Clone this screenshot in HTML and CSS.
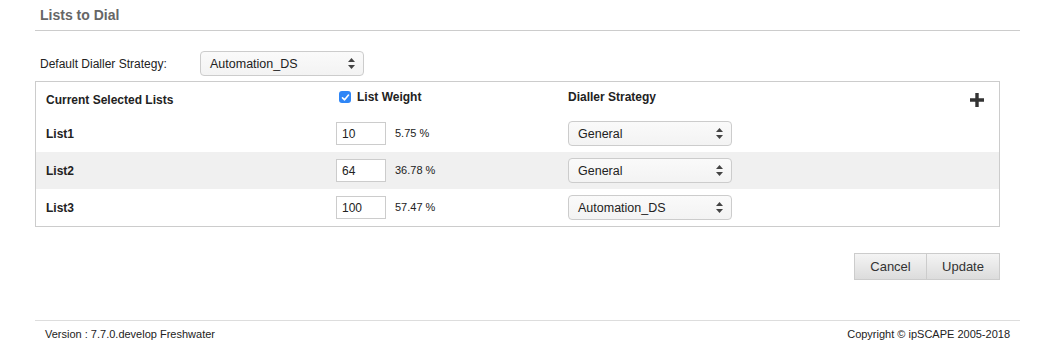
FILE: index.html
```html
<!DOCTYPE html>
<html lang="en">
<head>
    <meta charset="UTF-8">
    <title>Lists to Dial</title>
    <link rel="stylesheet" href="styles.css">
</head>
<body>
    <div class="page">
        <h2 class="title">Lists to Dial</h2>

        <div class="default-row">
            <label class="default-label">Default Dialler Strategy:</label>
            <div class="select select-default">
                <span>Automation_DS</span>
                <svg class="arrows" width="7" height="11" viewBox="0 0 7 11"><path d="M3.5 0 L7 4 H0 Z M3.5 11 L7 7 H0 Z" fill="#444"/></svg>
            </div>
        </div>

        <div class="lists">
            <div class="row head">
                <div class="cell name">Current Selected Lists</div>
                <div class="cell weight">
                    <span class="check"><svg width="9" height="9" viewBox="0 0 9 9"><path d="M1.5 4.8 L3.6 6.8 L7.5 2" stroke="#fff" stroke-width="1.6" fill="none" stroke-linecap="round" stroke-linejoin="round"/></svg></span>
                    List Weight
                </div>
                <div class="cell strategy">Dialler Strategy</div>
                <div class="cell add">
                    <svg width="14" height="14" viewBox="0 0 14 14"><path d="M5.3 0 H8.7 V5.3 H14 V8.7 H8.7 V14 H5.3 V8.7 H0 V5.3 H5.3 Z" fill="#333"/></svg>
                </div>
            </div>

            <div class="row">
                <div class="cell name">List1</div>
                <div class="cell weight">
                    <input class="weight-input" type="text" value="10">
                    <span class="pct">5.75 %</span>
                </div>
                <div class="cell strategy">
                    <div class="select">
                        <span>General</span>
                        <svg class="arrows" width="7" height="11" viewBox="0 0 7 11"><path d="M3.5 0 L7 4 H0 Z M3.5 11 L7 7 H0 Z" fill="#444"/></svg>
                    </div>
                </div>
                <div class="cell add"></div>
            </div>

            <div class="row alt">
                <div class="cell name">List2</div>
                <div class="cell weight">
                    <input class="weight-input" type="text" value="64">
                    <span class="pct">36.78 %</span>
                </div>
                <div class="cell strategy">
                    <div class="select">
                        <span>General</span>
                        <svg class="arrows" width="7" height="11" viewBox="0 0 7 11"><path d="M3.5 0 L7 4 H0 Z M3.5 11 L7 7 H0 Z" fill="#444"/></svg>
                    </div>
                </div>
                <div class="cell add"></div>
            </div>

            <div class="row">
                <div class="cell name">List3</div>
                <div class="cell weight">
                    <input class="weight-input" type="text" value="100">
                    <span class="pct">57.47 %</span>
                </div>
                <div class="cell strategy">
                    <div class="select">
                        <span>Automation_DS</span>
                        <svg class="arrows" width="7" height="11" viewBox="0 0 7 11"><path d="M3.5 0 L7 4 H0 Z M3.5 11 L7 7 H0 Z" fill="#444"/></svg>
                    </div>
                </div>
                <div class="cell add"></div>
            </div>
        </div>

        <div class="actions">
            <button class="btn">Cancel</button><button class="btn">Update</button>
        </div>

        <div class="footer">
            <span>Version : 7.7.0.develop Freshwater</span>
            <span>Copyright © ipSCAPE 2005-2018</span>
        </div>
    </div>
</body>
</html>
```

FILE: styles.css
```css
* {
    margin: 0;
    padding: 0;
    box-sizing: border-box;
}
body {
    font-family: "Liberation Sans", Arial, Helvetica, sans-serif;
    background-color: #fff;
    color: #222;
    font-size: 12px;
}
.page {
    width: 985px;
    margin-left: 35px;
}
.title {
    font-size: 14px;
    font-weight: bold;
    color: #666;
    padding: 7px 0 0 5px;
    height: 31px;
    border-bottom: 1px solid #ccc;
}
.default-row {
    display: flex;
    align-items: center;
    padding: 20px 0 5px 5px;
}
.default-label {
    width: 160px;
    color: #222;
}
.select {
    display: flex;
    align-items: center;
    justify-content: space-between;
    height: 25px;
    padding: 0 8px 0 9px;
    border: 1px solid #ccc;
    border-radius: 4px;
    background: linear-gradient(#fafafa, #f3f3f3);
    font-size: 12.5px;
    color: #222;
}
.select-default {
    width: 164px;
}
.arrows {
    display: block;
}
.lists {
    width: 965px;
    border: 1px solid #ccc;
}
.row {
    display: grid;
    grid-template-columns: 300px 232px 1fr 50px;
    align-items: center;
    height: 37px;
}
.row.head {
    height: 33px;
    align-items: start;
}
.row.alt {
    background-color: #f0f0f0;
}
.cell.name {
    padding-left: 10px;
    font-weight: bold;
    font-size: 12px;
}
.head .cell.name {
    padding-top: 11px;
}
.head .cell.weight,
.head .cell.strategy {
    padding-top: 8px;
    font-weight: bold;
}
.cell.weight {
    display: flex;
    align-items: center;
}
.head .cell.weight {
    padding-left: 3px;
}
.check {
    display: inline-flex;
    align-items: center;
    justify-content: center;
    width: 12px;
    height: 12px;
    margin-right: 6px;
    border-radius: 3px;
    background-color: #2f86f6;
}
.weight-input {
    width: 50px;
    height: 23px;
    padding-left: 5px;
    border: 1px solid #ccc;
    font-family: inherit;
    font-size: 12px;
    color: #222;
    outline: none;
}
.pct {
    margin-left: 9px;
    font-size: 11px;
    margin-top: -2px;
}
.strategy .select {
    width: 164px;
}
.cell.add {
    display: flex;
    justify-content: flex-end;
    padding: 11px 15px 0 0;
}
.actions {
    display: flex;
    justify-content: flex-end;
    padding: 26px 20px 0 0;
}
.btn {
    width: 73px;
    height: 27px;
    border: 1px solid #ccc;
    background: linear-gradient(#f4f4f4, #dcdcdc);
    font-family: inherit;
    font-size: 13px;
    color: #333;
}
.btn + .btn {
    border-left: none;
}
.footer {
    display: flex;
    justify-content: space-between;
    margin-top: 40px;
    border-top: 1px solid #ddd;
    padding: 7px 10px 0 10px;
    font-size: 11px;
    color: #222;
}
```
